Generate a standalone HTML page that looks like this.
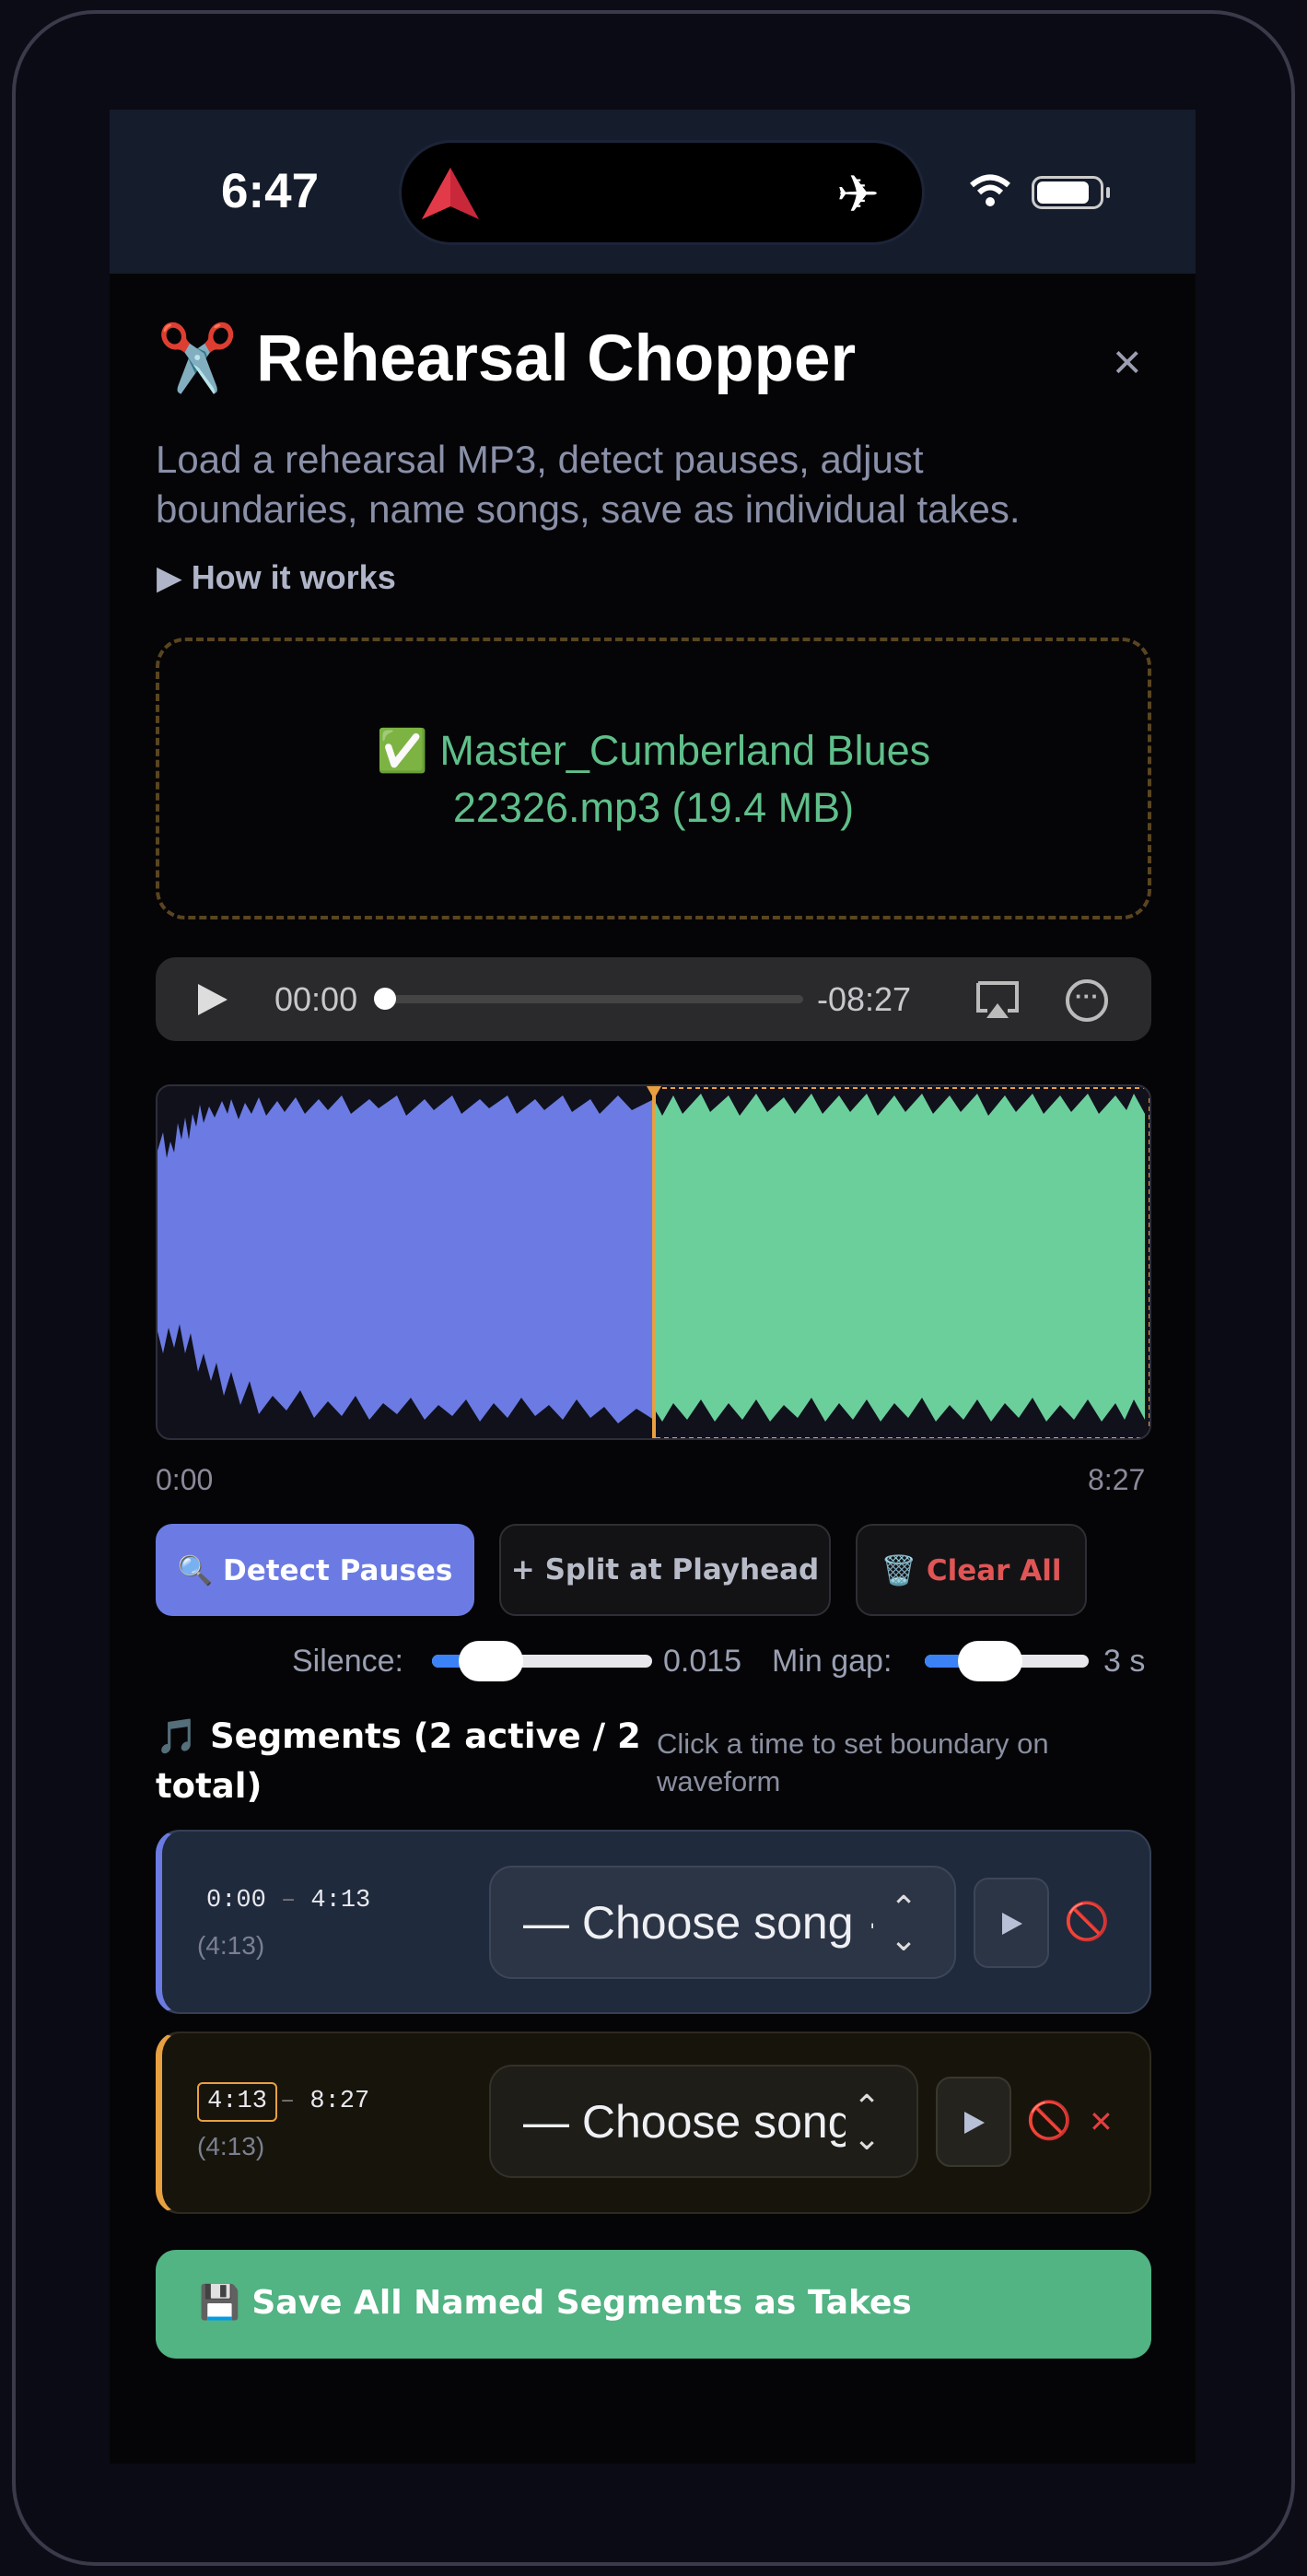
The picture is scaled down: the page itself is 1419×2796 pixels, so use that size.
<!DOCTYPE html>
<html><head><meta charset="utf-8"><style>
*{margin:0;padding:0;box-sizing:border-box}
body{width:1419px;height:2796px;background:#0c0c16;position:relative;overflow:hidden;font-family:"Liberation Sans","DejaVu Sans",sans-serif}
.a{position:absolute}
.frame{left:13px;top:11px;width:1393px;height:2774px;border:4px solid #3a3a4a;border-radius:90px;background:#0b0b15}
.screen{left:119px;top:119px;width:1179px;height:2555px;background:#050507}
.status{left:119px;top:119px;width:1179px;height:178px;background:#151c2c}
.t{white-space:nowrap}
.btn{border-radius:18px;display:flex;align-items:center;justify-content:center;font-family:"DejaVu Sans",sans-serif;font-weight:bold;font-size:31px}
.mono{font-family:"Liberation Mono",monospace}
</style></head><body>
<div class="a frame"></div>
<div class="a screen"></div>
<div class="a status"></div>
<div class="a t" style="left:240px;top:177px;font-size:53px;font-weight:bold;color:#fff">6:47</div>
<div class="a" style="left:433px;top:152px;width:571px;height:114px;border-radius:57px;background:#000;border:3px solid #1d2438"></div>
<svg class="a" style="left:456px;top:180px" width="66" height="60" viewBox="0 0 66 60"><polygon points="33,2 64,58 33,44 2,58" fill="#c8283a"/><polygon points="33,2 33,44 2,58" fill="#e23a48"/></svg>
<div class="a t" style="left:908px;top:178px;font-size:56px;color:#fff">✈</div>
<svg class="a" style="left:1052px;top:188px" width="46" height="38" viewBox="0 0 46 38"><path d="M3 13 Q23 -4 43 13" stroke="#fff" stroke-width="6" fill="none"/><path d="M11 21 Q23 10 35 21" stroke="#fff" stroke-width="6" fill="none"/><circle cx="23" cy="31" r="5" fill="#fff"/></svg>
<div class="a" style="left:1120px;top:191px;width:78px;height:36px;border:3px solid #ccc;border-radius:11px"></div>
<div class="a" style="left:1126px;top:197px;width:56px;height:24px;background:#fff;border-radius:6px"></div>
<div class="a" style="left:1201px;top:203px;width:4px;height:12px;background:#ccc;border-radius:2px"></div>

<div class="a t" style="left:170px;top:348px;font-size:71px;font-weight:bold;color:#fff">✂️ Rehearsal Chopper</div>
<div class="a t" style="left:1208px;top:362px;font-size:54px;color:#9a9eb0">×</div>
<div class="a" style="left:169px;top:472px;width:1010px;font-size:42px;line-height:54px;color:#8a90a8">Load a rehearsal MP3, detect pauses, adjust boundaries, name songs, save as individual takes.</div>
<div class="a t" style="left:170px;top:606px;font-size:36px;font-weight:bold;color:#b0b4c8">▶ How it works</div>

<div class="a" style="left:169px;top:692px;width:1081px;height:306px;border:4px dashed #5a4520;border-radius:32px"></div>
<div class="a" style="left:169px;top:784px;width:1081px;text-align:center;font-size:45px;line-height:62px;color:#5fbf8a">✅ Master_Cumberland Blues<br>22326.mp3 (19.4 MB)</div>

<div class="a" style="left:169px;top:1039px;width:1081px;height:91px;background:#2a2a2c;border-radius:22px"></div>
<svg class="a" style="left:213px;top:1066px" width="36" height="38"><polygon points="2,2 34,19 2,36" fill="#ddd"/></svg>
<div class="a t" style="left:298px;top:1064px;font-size:36px;color:#c8c8cc">00:00</div>
<div class="a" style="left:418px;top:1080px;width:454px;height:9px;background:#444;border-radius:5px"></div>
<div class="a" style="left:406px;top:1072px;width:24px;height:24px;background:#fff;border-radius:50%"></div>
<div class="a t" style="left:887px;top:1064px;font-size:36px;color:#c8c8cc">-08:27</div>
<svg class="a" style="left:1058px;top:1063px" width="50" height="46"><path d="M4 4h42v30h-10M14 34H4V4" stroke="#bbb" stroke-width="4" fill="none"/><polygon points="25,26 37,42 13,42" fill="#bbb"/></svg>
<div class="a" style="left:1157px;top:1063px;width:46px;height:46px;border:4px solid #bbb;border-radius:50%;color:#bbb;font-size:26px;line-height:28px;text-align:center;font-weight:bold">···</div>

<div class="a" style="left:169px;top:1177px;width:1081px;height:386px;background:#11111c;border:2px solid #2e2e3a;border-radius:16px;overflow:hidden">
<svg width="1081" height="386" viewBox="0 0 1081 386">
<path d="M0 70 L6 50 L10 78 L14 60 L18 72 L22 40 L26 58 L30 34 L34 58 L38 30 L42 44 L46 20 L50 40 L56 22 L62 34 L70 16 L76 30 L80 14 L88 36 L95 18 L102 30 L110 12 L118 32 L130 16 L138 28 L150 12 L160 30 L175 14 L185 26 L200 10 L210 30 L230 14 L240 24 L260 10 L270 32 L290 14 L300 26 L320 10 L330 30 L350 14 L360 24 L380 10 L390 30 L410 14 L420 26 L440 10 L450 28 L470 14 L480 30 L500 10 L515 26 L539 14 L539 362 L520 350 L500 366 L485 348 L470 360 L455 340 L440 362 L425 346 L410 358 L395 338 L380 360 L365 344 L350 364 L335 340 L320 358 L305 346 L290 362 L275 338 L260 356 L245 344 L230 362 L215 336 L200 358 L185 342 L170 360 L155 330 L140 352 L125 336 L110 356 L100 320 L90 346 L80 310 L72 336 L64 300 L58 320 L50 290 L44 310 L36 268 L30 290 L24 258 L18 284 L12 262 L6 290 L0 266Z" fill="#6b7be3"/>
<path d="M539 14 L548 32 L560 10 L570 30 L590 8 L600 28 L620 10 L632 32 L650 8 L662 28 L680 12 L692 30 L710 8 L722 30 L740 10 L752 28 L770 8 L782 32 L800 10 L812 28 L830 8 L842 30 L860 10 L872 28 L890 8 L902 32 L920 10 L932 28 L950 8 L962 30 L980 10 L992 28 L1010 8 L1022 30 L1040 10 L1052 26 L1060 8 L1072 30 L1072 362 L1060 340 L1050 362 L1040 344 L1025 364 L1010 340 L995 362 L980 346 L965 364 L950 338 L935 360 L920 344 L905 364 L890 340 L875 362 L860 346 L845 364 L830 338 L815 360 L800 344 L785 364 L770 340 L755 362 L740 344 L725 364 L710 338 L695 360 L680 346 L665 364 L650 340 L635 362 L620 344 L605 364 L590 340 L575 362 L560 344 L548 364 L539 350Z" fill="#6bcf9c"/>
<rect x="539" y="2" width="538" height="380" fill="none" stroke="#e8a040" stroke-width="2" stroke-dasharray="5 4"/>
<rect x="537" y="0" width="4" height="386" fill="#e8a040"/>
<polygon points="531,0 547,0 539,14" fill="#e8a040"/>
</svg></div>
<div class="a t" style="left:169px;top:1588px;font-size:32px;color:#8a8a9a">0:00</div>
<div class="a t" style="left:1181px;top:1588px;font-size:32px;color:#8a8a9a">8:27</div>

<div class="a btn" style="left:169px;top:1654px;width:346px;height:100px;background:#6b7be3;color:#fff">🔍 Detect Pauses</div>
<div class="a btn" style="left:542px;top:1654px;width:360px;height:100px;background:#131316;border:2px solid #2e2e34;color:#b8bcc8">+ Split at Playhead</div>
<div class="a btn" style="left:929px;top:1654px;width:251px;height:100px;background:#131316;border:2px solid #2e2e34;color:#e05555">🗑️ Clear All</div>

<div class="a t" style="left:317px;top:1784px;font-size:34px;color:#9aa0b2">Silence:</div>
<div class="a" style="left:469px;top:1796px;width:239px;height:14px;background:#e8e8ec;border-radius:7px"></div>
<div class="a" style="left:469px;top:1796px;width:60px;height:14px;background:#3b82f6;border-radius:7px"></div>
<div class="a" style="left:498px;top:1781px;width:70px;height:44px;background:#fff;border-radius:22px"></div>
<div class="a t" style="left:720px;top:1784px;font-size:34px;color:#9aa0b2">0.015</div>
<div class="a t" style="left:838px;top:1784px;font-size:34px;color:#9aa0b2">Min gap:</div>
<div class="a" style="left:1004px;top:1796px;width:178px;height:14px;background:#e8e8ec;border-radius:7px"></div>
<div class="a" style="left:1004px;top:1796px;width:60px;height:14px;background:#3b82f6;border-radius:7px"></div>
<div class="a" style="left:1040px;top:1781px;width:70px;height:44px;background:#fff;border-radius:22px"></div>
<div class="a t" style="left:1198px;top:1784px;font-size:34px;color:#9aa0b2">3 s</div>

<div class="a" style="left:169px;top:1858px;width:540px;font-family:'DejaVu Sans',sans-serif;font-weight:bold;font-size:37px;line-height:54px;color:#fff">🎵 Segments (2 active / 2 total)</div>
<div class="a" style="left:713px;top:1872px;width:500px;font-size:31px;line-height:41px;color:#8a8fa0">Click a time to set boundary on waveform</div>

<div class="a" style="left:169px;top:1986px;width:1081px;height:200px;background:#1f2a3d;border:2px solid #354055;border-left:7px solid #6b7be3;border-radius:26px"></div>
<div class="a t mono" style="left:224px;top:2048px;font-size:27px;color:#e8e8ee">0:00 <span style="color:#777">–</span> 4:13</div>
<div class="a t" style="left:214px;top:2096px;font-size:28px;color:#7a8090">(4:13)</div>
<div class="a" style="left:531px;top:2025px;width:507px;height:123px;background:#2c3546;border:2px solid #3d4659;border-radius:25px;overflow:hidden"></div>
<div class="a t" style="left:568px;top:2058px;font-size:50px;color:#eef0f4;width:380px;overflow:hidden">— Choose song ·</div>
<div class="a t" style="left:966px;top:2054px;font-size:36px;color:#ddd;line-height:34px">⌃<br>⌄</div>
<div class="a" style="left:1057px;top:2038px;width:82px;height:98px;background:#2c3546;border:2px solid #3d4659;border-radius:16px"></div>
<svg class="a" style="left:1087px;top:2075px" width="24" height="26"><polygon points="1,1 23,13 1,25" fill="#b8c0d8"/></svg>
<div class="a t" style="left:1155px;top:2062px;font-size:40px;color:#e03030">🚫</div>

<div class="a" style="left:169px;top:2205px;width:1081px;height:198px;background:#17140c;border:2px solid #2e2a1e;border-left:7px solid #e8a040;border-radius:26px"></div>
<div class="a t mono" style="left:214px;top:2260px;width:87px;height:43px;border:2px solid #e8a040;border-radius:6px;font-size:27px;color:#e8e8ee;text-align:center;line-height:39px">4:13</div>
<div class="a t mono" style="left:304px;top:2266px;font-size:27px;color:#e8e8ee"><span style="color:#777">–</span> 8:27</div>
<div class="a t" style="left:214px;top:2314px;font-size:28px;color:#7a8090">(4:13)</div>
<div class="a" style="left:531px;top:2241px;width:466px;height:123px;background:#1f1d18;border:2px solid #34312a;border-radius:25px"></div>
<div class="a t" style="left:568px;top:2274px;font-size:50px;color:#eef0f4;width:350px;overflow:hidden">— Choose song</div>
<div class="a t" style="left:926px;top:2270px;font-size:36px;color:#ddd;line-height:34px">⌃<br>⌄</div>
<div class="a" style="left:1016px;top:2254px;width:82px;height:98px;background:#25231e;border:2px solid #3a372e;border-radius:16px"></div>
<svg class="a" style="left:1046px;top:2291px" width="24" height="26"><polygon points="1,1 23,13 1,25" fill="#b8c0d8"/></svg>
<div class="a t" style="left:1114px;top:2278px;font-size:40px;color:#e03030">🚫</div>
<div class="a t" style="left:1182px;top:2284px;font-size:32px;color:#e04040">✕</div>

<div class="a" style="left:169px;top:2442px;width:1081px;height:118px;background:#52b383;border-radius:22px"></div>
<div class="a t" style="left:216px;top:2478px;font-family:'DejaVu Sans',sans-serif;font-weight:bold;font-size:36px;color:#fff">💾 Save All Named Segments as Takes</div>
</body></html>
